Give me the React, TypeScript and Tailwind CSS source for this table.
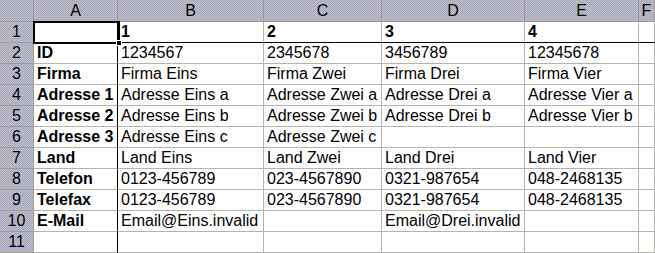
import React from "react";

const cols = ["A", "B", "C", "D", "E", "F"];

const rows: string[][] = [
  ["", "1", "2", "3", "4", ""],
  ["ID", "1234567", "2345678", "3456789", "12345678", ""],
  ["Firma", "Firma Eins", "Firma Zwei", "Firma Drei", "Firma Vier", ""],
  ["Adresse 1", "Adresse Eins a", "Adresse Zwei a", "Adresse Drei a", "Adresse Vier a", ""],
  ["Adresse 2", "Adresse Eins b", "Adresse Zwei b", "Adresse Drei b", "Adresse Vier b", ""],
  ["Adresse 3", "Adresse Eins c", "Adresse Zwei c", "", "", ""],
  ["Land", "Land Eins", "Land Zwei", "Land Drei", "Land Vier", ""],
  ["Telefon", "0123-456789", "023-4567890", "0321-987654", "048-2468135", ""],
  ["Telefax", "0123-456789", "023-4567890", "0321-987654", "048-2468135", ""],
  ["E-Mail", "Email@Eins.invalid", "", "Email@Drei.invalid", "", ""],
  ["", "", "", "", "", ""],
];

const headerBg =
  "bg-[#b4b4c4] bg-[image:repeating-conic-gradient(#c2c2b2_0_25%,#a4a4d4_0_50%)] bg-size-[2px_2px]";

export default function App() {
  return (
    <div
      className="relative w-[655px] h-[253px] overflow-hidden bg-white text-black"
      style={{ fontFamily: '"Liberation Sans", Arial, sans-serif' }}
    >
      <div className="grid grid-cols-[34px_84px_146px_118px_143px_114px_1fr] grid-rows-[22px_repeat(11,21px)] text-[16px] leading-[20px]">
        {/* Corner */}
        <div className={`${headerBg} border-r border-b border-[#9c9c94]`} />
        {cols.map((c) => (
          <div
            key={c}
            className={`${headerBg} border-r border-b border-[#9c9c94] flex items-center justify-center pt-[1px]`}
          >
            {c}
          </div>
        ))}
        {rows.map((r, ri) => (
          <React.Fragment key={ri}>
            <div
              className={`${headerBg} border-r border-b border-[#9c9c94] flex items-center justify-center`}
            >
              {ri + 1}
            </div>
            {r.map((v, ci) => {
              const isA = ci === 0;
              const isRow1 = ri === 0;
              const bold = isA || isRow1;
              return (
                <div
                  key={ci}
                  className={`border-r border-b overflow-hidden whitespace-nowrap pl-[3px] ${
                    isA ? "border-r-black" : "border-r-[#b4b4ac]"
                  } ${isRow1 ? "border-b-black" : "border-b-[#b4b4ac]"} ${
                    bold ? "font-bold" : ""
                  }`}
                >
                  {v}
                </div>
              );
            })}
          </React.Fragment>
        ))}
      </div>
      {/* Selection around A1 */}
      <div className="absolute left-[33px] top-[21px] w-[87px] h-[23px] border-2 border-black pointer-events-none" />
      <div className="absolute left-[116px] top-[40px] w-[6px] h-[6px] bg-black border border-white" />
    </div>
  );
}
